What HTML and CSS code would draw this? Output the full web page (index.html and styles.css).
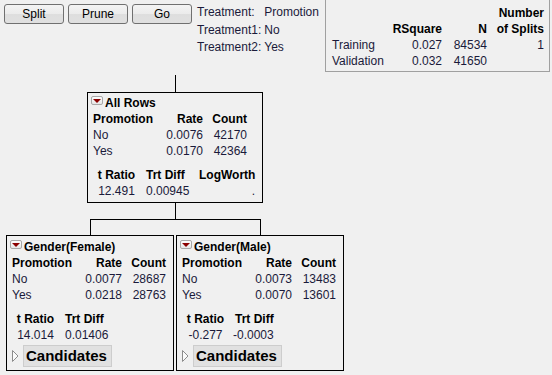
FILE: index.html
```html
<html>

<head>
    <title>Partition</title>
    <link rel="stylesheet" href="styles.css">
</head>

<body>
    <div class="top">
        <div class="buttons">
            <button type="button" class="btn">Split</button>
            <button type="button" class="btn">Prune</button>
            <button type="button" class="btn">Go</button>
        </div>
        <div class="treatment">
            <span>Treatment:</span><span>Promotion</span>
            <span>Treatment1:</span><span>No</span>
            <span>Treatment2:</span><span>Yes</span>
        </div>
        <div class="fit">
            <span></span><span></span><span></span><b class="r">Number</b>
            <span></span><b class="r">RSquare</b><b class="r">N</b><b class="r">of Splits</b>
            <span>Training</span><span class="r">0.027</span><span class="r">84534</span><span class="r">1</span>
            <span>Validation</span><span class="r">0.032</span><span class="r">41650</span><span></span>
        </div>
    </div>

    <div class="tree">
        <div class="stem"></div>
        <div class="node root">
            <div class="title"><span class="menu"></span><b>All Rows</b></div>
            <div class="rates">
                <b>Promotion</b><b class="r">Rate</b><b class="r">Count</b>
                <span>No</span><span class="r">0.0076</span><span class="r">42170</span>
                <span>Yes</span><span class="r">0.0170</span><span class="r">42364</span>
            </div>
            <div class="stats">
                <b class="c">t Ratio</b><b>Trt Diff</b><b class="r">LogWorth</b>
                <span class="c">12.491</span><span>0.00945</span><span class="r">.</span>
            </div>
        </div>
        <div class="stem short"></div>
        <div class="branch"></div>
        <div class="children">
            <div class="node leaf">
                <div class="title"><span class="menu"></span><b>Gender(Female)</b></div>
                <div class="rates">
                    <b>Promotion</b><b class="r">Rate</b><b class="r">Count</b>
                    <span>No</span><span class="r">0.0077</span><span class="r">28687</span>
                    <span>Yes</span><span class="r">0.0218</span><span class="r">28763</span>
                </div>
                <div class="stats">
                    <b class="c">t Ratio</b><b>Trt Diff</b><span></span>
                    <span class="c">14.014</span><span>0.01406</span><span></span>
                </div>
                <div class="cand">
                    <svg class="disclose" width="7" height="12" viewBox="0 0 7 12"><polygon points="0.5,0.5 6,6 0.5,11.5" fill="#fafafa" stroke="#8c8c8c"/></svg>
                    <span class="cand-box">Candidates</span>
                </div>
            </div>
            <div class="node leaf">
                <div class="title"><span class="menu"></span><b>Gender(Male)</b></div>
                <div class="rates">
                    <b>Promotion</b><b class="r">Rate</b><b class="r">Count</b>
                    <span>No</span><span class="r">0.0073</span><span class="r">13483</span>
                    <span>Yes</span><span class="r">0.0070</span><span class="r">13601</span>
                </div>
                <div class="stats">
                    <b class="c">t Ratio</b><b>Trt Diff</b><span></span>
                    <span class="c">-0.277</span><span class="neg">-0.0003</span><span></span>
                </div>
                <div class="cand">
                    <svg class="disclose" width="7" height="12" viewBox="0 0 7 12"><polygon points="0.5,0.5 6,6 0.5,11.5" fill="#fafafa" stroke="#8c8c8c"/></svg>
                    <span class="cand-box">Candidates</span>
                </div>
            </div>
        </div>
    </div>
</body>

</html>
```

FILE: styles.css
```css
body {
    margin: 0;
    background: #f0f0f0;
    font-family: "Liberation Sans", Arial, sans-serif;
    font-size: 12px;
    color: #1a1a3a;
}

b {
    color: #000;
}

.r {
    text-align: right;
}

.c {
    text-align: center;
}

/* top strip */
.top {
    display: flex;
    align-items: flex-start;
    height: 72px;
    padding-left: 4px;
}

.buttons {
    display: flex;
    gap: 4px;
    margin-top: 4px;
}

.btn {
    width: 60px;
    height: 20px;
    padding: 0;
    font-family: inherit;
    font-size: 12px;
    color: #000;
    border: 1px solid #707070;
    border-radius: 3px;
    background: linear-gradient(#f4f4f4, #ebebeb 50%, #dedede 50%, #e0e0e0);
}

.treatment {
    display: grid;
    grid-template-columns: auto auto;
    column-gap: 3px;
    margin: 4px 0 0 5px;
    line-height: 17.5px;
}

.fit {
    display: grid;
    grid-template-columns: 50px 60px 45px 57px;
    line-height: 16px;
    margin: -1px 2px 0 auto;
    padding: 5px 5px 2px 6px;
    border: 1px solid #a0a0a0;
}

/* tree */
.tree {
    display: flex;
    flex-direction: column;
    align-items: center;
    width: 338px;
    margin: 3px 0 0 6px;
}

.stem {
    width: 1px;
    height: 17px;
    background: #000;
}

.stem.short {
    height: 16px;
}

.branch {
    width: 169px;
    height: 15px;
    border: 1px solid #000;
    border-bottom: none;
}

.children {
    display: flex;
    gap: 2px;
}

.node {
    border: 1px solid #000;
    padding: 2px 3px 3px 3px;
    line-height: 16px;
}

.root {
    width: 168px;
}

.leaf {
    width: 160px;
    padding-top: 3px;
    padding-bottom: 3px;
}

.title {
    display: flex;
    align-items: flex-start;
}

.menu {
    display: flex;
    justify-content: center;
    align-items: center;
    box-sizing: border-box;
    width: 12px;
    height: 9px;
    margin: 1px 2px 0 0;
    border: 1px solid #a8a8a8;
    border-radius: 2px;
    background: linear-gradient(#fdfdfd, #e6e6e6);
}

.menu::after {
    content: "";
    border-left: 4px solid transparent;
    border-right: 4px solid transparent;
    border-top: 4px solid #8b0000;
}

.rates {
    display: grid;
    grid-template-columns: 64px 46px 44px;
    margin-left: 2px;
}

.stats {
    display: grid;
    grid-template-columns: 47px 47px 56px;
    column-gap: 6px;
    margin: 8px 0 0 2px;
    white-space: nowrap;
}

.neg {
    margin-left: -2px;
}

.cand {
    display: flex;
    align-items: center;
    margin-top: 2px;
}

.disclose {
    margin-left: 2px;
}

.cand-box {
    width: 85px;
    margin-left: 4px;
    padding-left: 2px;
    line-height: 20px;
    font-size: 15px;
    font-weight: bold;
    color: #000;
    background: #e1e1e1;
    border: 1px solid #cdcdcd;
}
```
